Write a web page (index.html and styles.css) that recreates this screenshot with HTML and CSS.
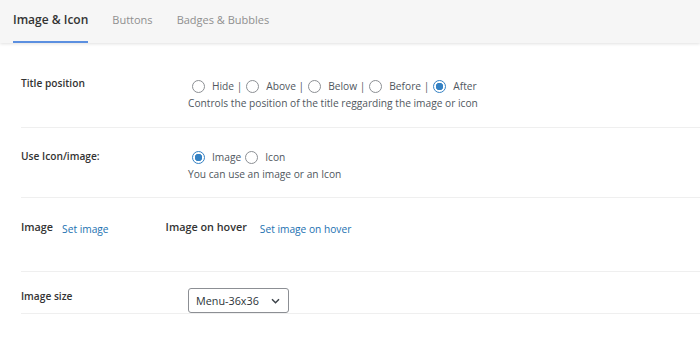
FILE: index.html
```html
<!DOCTYPE html>
<html lang="en">
<head>
    <meta charset="UTF-8">
    <meta name="viewport" content="width=device-width, initial-scale=1.0">
    <title>Menu Item Settings</title>
    <link rel="stylesheet" href="styles.css">
</head>
<body>
    <div class="tabs">
        <div class="tab active">Image &amp; Icon</div>
        <div class="tab">Buttons</div>
        <div class="tab">Badges &amp; Bubbles</div>
    </div>

    <div class="settings">
        <div class="row row-title">
            <div class="label">Title position</div>
            <div class="field">
                <div class="radios">
                    <label class="radio"><span class="dot"></span>Hide |</label>
                    <label class="radio"><span class="dot"></span>Above |</label>
                    <label class="radio"><span class="dot"></span>Below |</label>
                    <label class="radio"><span class="dot"></span>Before |</label>
                    <label class="radio"><span class="dot checked"></span>After</label>
                </div>
                <div class="desc">Controls the position of the title reggarding the image or icon</div>
            </div>
        </div>

        <div class="row row-use">
            <div class="label">Use Icon/image:</div>
            <div class="field">
                <div class="radios">
                    <label class="radio"><span class="dot checked"></span>Image</label>
                    <label class="radio"><span class="dot"></span>Icon</label>
                </div>
                <div class="desc">You can use an image or an Icon</div>
            </div>
        </div>

        <div class="row row-image">
            <div class="pair">
                <span class="label-inline">Image</span>
                <a class="link" href="#">Set image</a>
            </div>
            <div class="pair pair-hover">
                <span class="label-inline">Image on hover</span>
                <a class="link" href="#">Set image on hover</a>
            </div>
        </div>

        <div class="row row-size">
            <div class="label">Image size</div>
            <div class="field">
                <div class="select">
                    <span>Menu-36x36</span>
                    <svg class="chevron" width="9" height="6" viewBox="0 0 9 6">
                        <path d="M1 1.2l3.5 3.5 3.5-3.5" fill="none" stroke="#3c434a" stroke-width="1.5"/>
                    </svg>
                </div>
            </div>
        </div>
    </div>
</body>
</html>
```

FILE: styles.css
```css
body {
    margin: 0;
    font-family: 'Open Sans', 'Noto Sans', sans-serif;
    font-size: 10.2px;
    color: #50575e;
    background-color: #fff;
}

/* tab bar */
.tabs {
    display: flex;
    height: 43px;
    padding-left: 13px;
    background-color: #f6f6f6;
    box-shadow: 0 1px 3px rgba(0, 0, 0, 0.12);
}

.tab {
    display: flex;
    align-items: center;
    margin-right: 24px;
    padding-bottom: 3px;
    font-size: 11px;
    color: #8f8f8f;
    border-bottom: 2px solid transparent;
}

.tab.active {
    font-size: 12px;
    color: #333;
    font-weight: 600;
    border-bottom-color: #5b8fe0;
}

/* settings rows */
.settings {
    margin-top: 12px;
    padding-left: 21px;
}

.row {
    display: flex;
    box-sizing: border-box;
    border-bottom: 1px solid #efefef;
}

.label {
    width: 167px;
    flex-shrink: 0;
    font-weight: 600;
    color: #333;
    line-height: 16px;
}

.row-title {
    height: 73px;
    padding-top: 20px;
}

.row-title .field {
    margin-top: 2px;
}

.row-use {
    height: 70px;
    padding-top: 20px;
}

.row-image {
    height: 74px;
    padding-top: 21px;
}

.row-size {
    height: 42px;
    padding-top: 16px;
}

.radios {
    display: flex;
    align-items: center;
    height: 18px;
    margin-left: 4px;
}

.radio {
    display: flex;
    align-items: center;
    margin-right: 4px;
}

.dot {
    width: 11px;
    height: 11px;
    margin-right: 7px;
    border: 1px solid #8c8f94;
    border-radius: 50%;
    background: #fff;
}

.dot.checked {
    border-color: #3582c4;
    background: radial-gradient(circle, #3582c4 0 3.5px, #fff 4px);
}

.desc {
    line-height: 16px;
}

.pair {
    display: flex;
    align-items: flex-start;
}

.pair-hover {
    margin-left: 57px;
}

.label-inline {
    font-weight: 600;
    color: #333;
    font-size: 10.8px;
    line-height: 16px;
}

.link {
    margin-left: 9px;
    margin-top: 2px;
    color: #2271b1;
    text-decoration: none;
    line-height: 16px;
}

.pair-hover .link {
    margin-left: 13px;
}

.select {
    display: flex;
    align-items: center;
    justify-content: space-between;
    width: 101px;
    height: 25px;
    padding: 0 8px 0 7px;
    box-sizing: border-box;
    border: 1px solid #8c8f94;
    border-radius: 3px;
    background: #fff;
    font-size: 10.8px;
    color: #2c3338;
}
```
